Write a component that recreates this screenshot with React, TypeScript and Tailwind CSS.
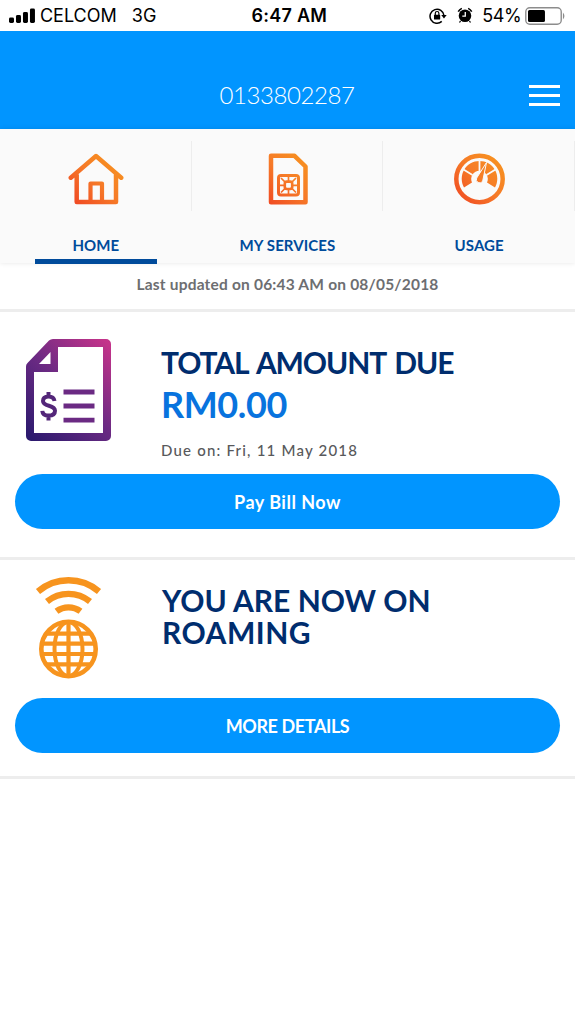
import type { ReactNode } from "react";

function StatusBar() {
  return (
    <div className="flex h-[31px] items-center bg-white px-[9px] font-['Inter',sans-serif] text-[18px] text-black">
      <svg width="26" height="15" viewBox="0 0 26 15">
        <rect x="0" y="9.5" width="5" height="5.5" rx="1.5" />
        <rect x="7" y="7" width="5" height="8" rx="1.5" />
        <rect x="14" y="4" width="5" height="11" rx="1.5" />
        <rect x="21" y="0.5" width="5" height="14.5" rx="1.5" />
      </svg>
      <span className="ml-[5px] w-[92px] whitespace-nowrap">CELCOM</span>
      <span className="w-[120px] whitespace-nowrap">3G</span>
      <span className="w-[178px] whitespace-nowrap font-semibold tracking-[0.25px]">6:47 AM</span>
      <svg width="18" height="18" viewBox="0 0 18 18" fill="none" stroke="black">
        <path d="M12.8 14.4A7 7 0 1 1 15 8.5" strokeWidth="1.5" />
        <path d="M12.3 8h5.4L15 11.5z" fill="black" stroke="none" />
        <rect x="5" y="7.8" width="6.2" height="4.7" rx="0.6" fill="black" stroke="none" />
        <path d="M6.3 8V6.3a1.8 1.8 0 0 1 3.6 0V8" strokeWidth="1.2" />
      </svg>
      <svg className="ml-[10px]" width="16" height="17" viewBox="0 0 16 17" fill="none">
        <circle cx="8" cy="8.8" r="6.3" fill="black" />
        <path d="M1.2 4.6A10 10 0 0 1 4.8 1.4M14.8 4.6A10 10 0 0 0 11.2 1.4" stroke="black" strokeWidth="1.6" />
        <path d="M3.5 14 2.5 15.5M12.5 14l1 1.5" stroke="black" strokeWidth="1.3" />
        <path d="M8.3 5v4.1H5.3" stroke="white" strokeWidth="1.3" />
      </svg>
      <span className="ml-[9px] w-[43px] whitespace-nowrap tracking-[-0.4px]">54%</span>
      <svg width="41" height="18" viewBox="0 0 41 18">
        <rect x="0.8" y="0.8" width="35.5" height="16.4" rx="4" fill="white" stroke="#8c8c8c" strokeWidth="1.4" />
        <rect x="3" y="3" width="17" height="12" rx="1.5" fill="black" />
        <path d="M38 5.5q3 3.5 0 7z" fill="#8c8c8c" />
      </svg>
    </div>
  );
}

function Header() {
  return (
    <header className="relative flex h-[98px] items-center justify-center bg-[#0195ff] pr-px pt-[30px] text-white">
      <span className="text-[24px] font-light tracking-[-0.42px]">0133802287</span>
      <button className="absolute right-[15px] top-[54px] flex flex-col gap-[6px]" aria-label="Menu">
        <span className="h-[3px] w-[31px] bg-white" />
        <span className="h-[3px] w-[31px] bg-white" />
        <span className="h-[3px] w-[31px] bg-white" />
      </button>
    </header>
  );
}

function OrangeGradient({ id }: { id: string }) {
  return (
    <defs>
      <linearGradient id={id} x1="0" y1="56" x2="56" y2="0" gradientUnits="userSpaceOnUse">
        <stop offset="0.1" stopColor="#f04a23" />
        <stop offset="0.5" stopColor="#f67b28" />
        <stop offset="0.9" stopColor="#f7941e" />
      </linearGradient>
    </defs>
  );
}

function HomeIcon() {
  return (
    <svg width="56" height="56" viewBox="0 0 56 56" fill="none" stroke="url(#home)" strokeWidth="4.5" strokeLinecap="round" strokeLinejoin="round">
      <OrangeGradient id="home" />
      <path d="M2.8 26.7 28 5l25.2 21.7M8.700 24V51H48V24" />
      <path d="M22.5 51V32.5h11.5V51" strokeWidth="4.2" />
    </svg>
  );
}

function SimIcon() {
  return (
    <svg width="56" height="56" viewBox="0 0 56 56" fill="none" stroke="url(#sim)" strokeLinejoin="round">
      <OrangeGradient id="sim" />
      <path d="M11 4.8H34.5L45.5 15.5V51.2H11z" strokeWidth="4.5" />
      <rect x="18.5" y="24.5" width="20" height="19.5" rx="2.5" strokeWidth="3" />
      <path d="M28.5 25v6M28.5 38v6M18.5 34.300h6M32.5 34.300h6M21 27l5 5M36 27l-5 5M21 41.500l5-5M36 41.500l-5-5" strokeWidth="1.700" />
      <rect x="24.8" y="30.6" width="7.4" height="7.4" rx="2" strokeWidth="2.6" />
    </svg>
  );
}

function GaugeIcon() {
  return (
    <svg width="56" height="56" viewBox="0 0 56 56" fill="none">
      <OrangeGradient id="gauge" />
      <circle cx="27.5" cy="28" r="23.2" stroke="url(#gauge)" strokeWidth="4.5" />
      <path d="M12 36.500A17.800 17.800 0 1 1 43 36.500L35 31.500A8.300 8.300 0 1 0 20 31.500z" fill="url(#gauge)" />
      <path d="M27.500 9v11M11.500 18.500l9 5.500M43.500 18.500l-9 5.500" stroke="#fafafa" strokeWidth="1.800" />
      <path d="M34.500 11.500 24.700 27a3.300 3.300 0 0 0 6 3z" fill="url(#gauge)" stroke="#fafafa" strokeWidth="1" />
    </svg>
  );
}

function Tab({ label, icon, active }: { label: string; icon: ReactNode; active?: boolean }) {
  return (
    <div className="flex flex-1 flex-col items-center">
      <span className="flex h-[70px] w-full shrink-0 justify-center border-r border-[#ededed] pl-[2px] pt-[10px]">{icon}</span>
      <span className="mt-[24px] h-[20px] shrink-0 text-[15px] font-bold leading-[20px] tracking-[0.1px] text-[#004b9b]">{label}</span>
      {active && <span className="mt-[4px] h-[5px] w-[122px] shrink-0 bg-[#004b9b]" />}
    </div>
  );
}

function BillIcon() {
  return (
    <svg width="86" height="104" viewBox="0 0 86 104">
      <defs>
        <linearGradient id="bill" x1="0" y1="95" x2="86" y2="8" gradientUnits="userSpaceOnUse">
          <stop offset="0" stopColor="#2c1a6e" />
          <stop offset="0.5" stopColor="#6b2a83" />
          <stop offset="1" stopColor="#c4338a" />
        </linearGradient>
      </defs>
      <path
        fillRule="evenodd"
        fill="url(#bill)"
        d="M28 1H81a5 5 0 0 1 5 5V98a5 5 0 0 1-5 5H6a5 5 0 0 1-5-5V29a5 5 0 0 1 1.500-4L24 2.500A6 6 0 0 1 28 1zM33 9V34H9V95H78V9zM25.500 14 14 26H25.500z"
      />
      <path d="M38.5 54H69.5M38.5 68H69.5M38.5 82.2H69.5" stroke="#6b2a83" strokeWidth="4.8" />
      <path d="M29.500 63c-.5-3-2.500-4.500-6-4.500-3.500 0-5.500 1.800-5.500 4.500 0 6.500 12 3 12 9.800 0 3.200-2.500 4.800-6.300 4.800-3.700 0-6.200-1.800-6.400-4.800M23.500 54v4.500M23.500 77.500V82.500" stroke="#532679" strokeWidth="4" fill="none" />
    </svg>
  );
}

function RoamingIcon() {
  return (
    <svg width="70" height="106" viewBox="0 0 70 106" fill="none" stroke="#f7941e">
      <path d="M4 16.5a47 47 0 0 1 61 0" strokeWidth="6.3" />
      <path d="M13 26.5a34 34 0 0 1 43 0" strokeWidth="6.3" />
      <path d="M22.5 36.3a20 20 0 0 1 24 0" strokeWidth="6.3" />
      <circle cx="34.5" cy="74" r="27.2" strokeWidth="4.6" />
      <ellipse cx="34.5" cy="74" rx="14" ry="27" strokeWidth="4" />
      <path d="M34.5 47v54M12 58.7h45M8 68.7h53M8 79h53M12 89.3h45" strokeWidth="4.2" />
    </svg>
  );
}

function PillButton({ children }: { children: ReactNode }) {
  return (
    <button className="mx-[15px] h-[55px] rounded-full bg-[#0195ff] pt-[2px] text-[18px] font-bold text-white">
      {children}
    </button>
  );
}

export default function App() {
  return (
    <div className="flex h-[1024px] w-full flex-col overflow-hidden bg-white font-['Lato',sans-serif]">
      <StatusBar />
      <Header />
      <nav className="z-10 flex h-[134px] shrink-0 bg-[#fafafa] pt-[12px] shadow-[0_0_5px_rgba(0,0,0,0.1)]">
        <Tab label="HOME" icon={<HomeIcon />} active />
        <Tab label="MY SERVICES" icon={<SimIcon />} />
        <Tab label="USAGE" icon={<GaugeIcon />} />
      </nav>

      <div className="flex h-[49px] shrink-0 items-center justify-center border-b-[3px] border-[#ededed] pb-[2px] text-[15.5px] font-bold text-[#6d6e71]">
        <span className="tracking-[0.2px]">Last updated on 06:43 AM on 08/05/2018</span>
      </div>

      <section className="flex h-[248px] shrink-0 flex-col border-b-[3px] border-[#ededed]">
        <div className="flex h-[162px] pl-[25px] pt-[26px]">
          <BillIcon />
          <div className="pl-[50px] pt-[6px]">
            <h2 className="whitespace-nowrap text-[30px] font-bold leading-[36px] tracking-[-1.1px] text-[#002d6e] [word-spacing:3px]">
              TOTAL AMOUNT DUE
            </h2>
            <p className="text-[36px] font-bold leading-[48px] tracking-[-0.4px] text-[#0873de]">RM0.00</p>
            <p className="mt-[12px] text-[15px] font-medium leading-[20px] tracking-[1.2px] text-[#58595b]">Due on: Fri, 11 May 2018</p>
          </div>
        </div>
        <PillButton>
          <span className="tracking-[0.5px]">Pay Bill Now</span>
        </PillButton>
      </section>

      <section className="flex h-[219px] shrink-0 flex-col border-b-[3px] border-[#ededed]">
        <div className="flex h-[138px] pl-[34px] pt-[15px]">
          <RoamingIcon />
          <h2 className="flex flex-col pl-[58px] pt-[9px] text-[30px] font-bold leading-[32px] text-[#002d6e]">
            <span>YOU ARE NOW ON</span>
            <span className="tracking-[0.5px]">ROAMING</span>
          </h2>
        </div>
        <PillButton>
          <span className="tracking-[-0.4px]">MORE DETAILS</span>
        </PillButton>
      </section>
    </div>
  );
}
